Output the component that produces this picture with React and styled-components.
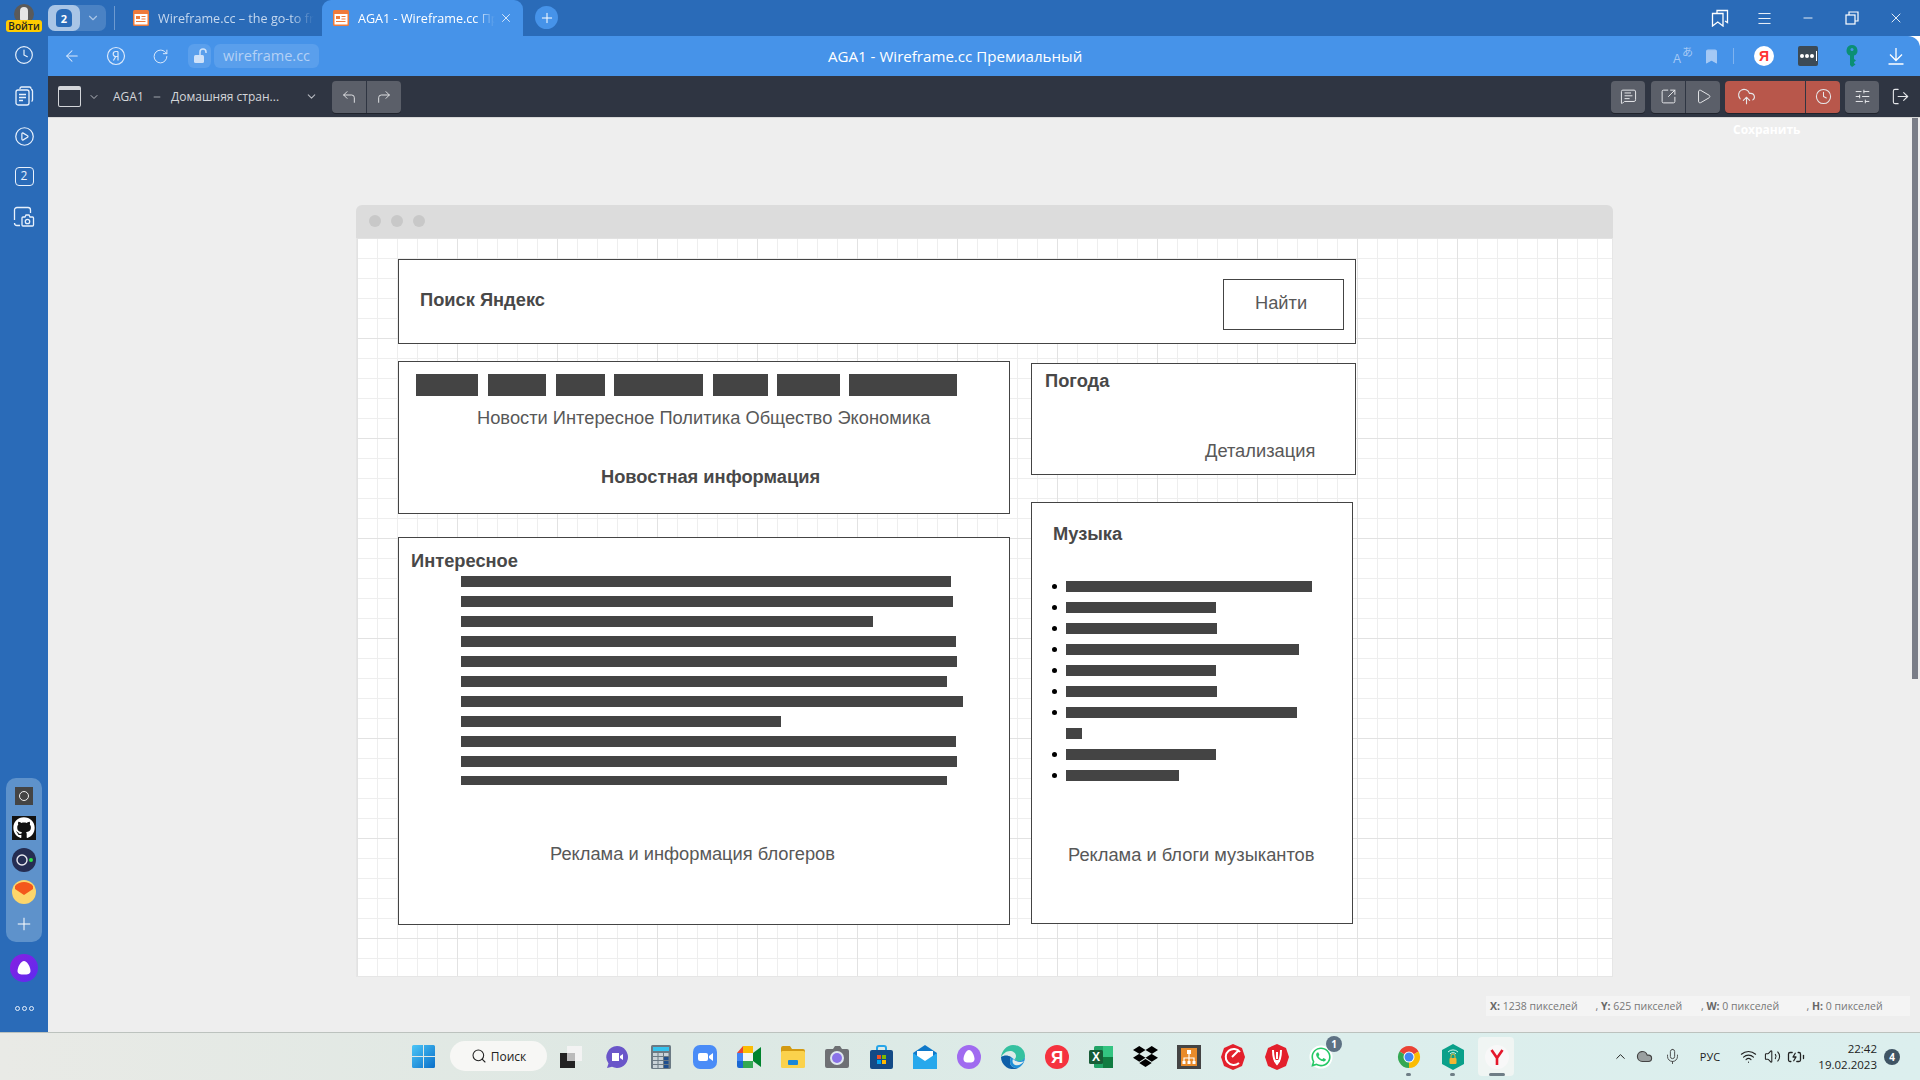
import React from 'react';
import styled, { createGlobalStyle } from 'styled-components';
import {
  ArrowLeft, RotateCw, Clock, CirclePlay, X, Plus, ChevronDown,
  CornerUpLeft, CornerUpRight, MessageSquareText, SquareArrowOutUpRight, Play, CloudUpload,
  SlidersHorizontal, LogOut, Menu, Minus, Bookmark, Search,
  ChevronUp, Mic, Wifi, Volume2, Cloud, BatteryCharging,
} from 'lucide-react';
import { FaGithub, FaDropbox, FaWhatsapp } from 'react-icons/fa';

const GlobalStyle = createGlobalStyle`
  html, body { margin: 0; padding: 0; width: 1920px; height: 1080px; overflow: hidden; }
  * { box-sizing: border-box; }
  body { font-family: "Open Sans", "Noto Sans", sans-serif; }
`;

const Page = styled.div`
  width: 1920px;
  height: 1080px;
  display: flex;
  flex-direction: column;
  overflow: hidden;
`;

/* tab strip */
const TabStrip = styled.div`
  height: 36px;
  flex: none;
  display: flex;
  align-items: stretch;
  background: #2a6bb8;
  color: #fff;
`;

const Avatar = styled.div`
  position: relative;
  width: 48px;
  flex: none;
`;

const AvatarHead = styled.div`
  position: absolute;
  left: 14px;
  top: 4px;
  width: 20px;
  height: 20px;
  border-radius: 50%;
  background: #5a5a5a;
  &::after {
    content: '';
    position: absolute;
    left: 6px;
    top: 3px;
    width: 8px;
    height: 14px;
    border-radius: 4px 4px 2px 2px;
    background: #e6e6e6;
  }
`;

const LoginBadge = styled.div`
  position: absolute;
  left: 6px;
  top: 20px;
  width: 36px;
  height: 12px;
  border-radius: 3px;
  background: #fc0;
  color: #222;
  font: 600 10px/12px "Open Sans", sans-serif;
  text-align: center;
`;

const CounterPill = styled.div`
  width: 58px;
  height: 26px;
  margin-top: 5px;
  display: flex;
  border-radius: 7px;
  background: #4a82c4;
`;

const CounterNum = styled.div`
  width: 32px;
  display: flex;
  align-items: center;
  justify-content: center;
  border-radius: 7px;
  background: #a9c5e6;
`;

const CounterShield = styled.div`
  width: 16px;
  height: 18px;
  border-radius: 6px 6px 3px 3px;
  background: #2a6bb8;
  color: #fff;
  font: 700 11px/19px "Open Sans", sans-serif;
  text-align: center;
`;

const CounterArrow = styled.div`
  flex: 1;
  display: flex;
  align-items: center;
  justify-content: center;
  color: #a9c5e6;
`;

const StripDivider = styled.div`
  width: 1px;
  height: 24px;
  margin: 6px 10px 0 8px;
  background: #6d9ad0;
`;

const Tab = styled.div`
  width: ${(p) => (p.$active ? 201 : 197)}px;
  flex: none;
  display: flex;
  align-items: center;
  gap: 9px;
  padding-left: ${(p) => (p.$active ? 11 : 8)}px;
  border-radius: 9px 9px 0 0;
  background: ${(p) => (p.$active ? '#4693e9' : 'transparent')};
  color: ${(p) => (p.$active ? '#fff' : '#c5d8ef')};
`;

const TabTitle = styled.div`
  width: ${(p) => (p.$active ? 137 : 156)}px;
  overflow: hidden;
  white-space: nowrap;
  font-size: 12.6px;
  mask-image: linear-gradient(to right, #000 85%, transparent);
`;

const TabClose = styled.div`
  margin-left: -5px;
  display: flex;
  color: #e8f1fc;
`;

const NewTab = styled.div`
  width: 23px;
  height: 23px;
  margin: 6px 0 0 12px;
  display: flex;
  align-items: center;
  justify-content: center;
  border-radius: 50%;
  background: #4693e9;
`;

const WindowButtons = styled.div`
  margin-left: auto;
  padding-right: 2px;
  display: flex;
`;

const Slot = styled.div`
  width: ${(p) => p.$w || 44}px;
  flex: none;
  display: flex;
  align-items: center;
  justify-content: center;
  color: ${(p) => p.$color || 'inherit'};
`;

/* main area under the tabs */
const Middle = styled.div`
  flex: 1;
  min-height: 0;
  display: flex;
`;

const Sidebar = styled.div`
  width: 48px;
  flex: none;
  display: flex;
  flex-direction: column;
  align-items: center;
  background: #2a6bb8;
  color: #e8f1fc;
`;

const SideIcon = styled.div`
  width: 48px;
  height: 40.5px;
  display: flex;
  align-items: center;
  justify-content: center;
  &:first-child { margin-top: -1px; }
`;

const SideBoxIcon = styled.div`
  width: 19px;
  height: 19px;
  border: 1.5px solid #e8f1fc;
  border-radius: 4px;
  font: 500 12px/16px "Open Sans", sans-serif;
  text-align: center;
`;

const SideBottom = styled.div`
  margin-top: auto;
  display: flex;
  flex-direction: column;
  align-items: center;
`;

const SidePanel = styled.div`
  width: 36px;
  padding: 2px 0;
  border-radius: 10px;
  background: #5e92cb;
`;

const PanelSlot = styled.div`
  height: 32px;
  display: flex;
  align-items: center;
  justify-content: center;
  color: #fff;
`;

const AliceSlot = styled(PanelSlot)`
  margin-top: 10px;
`;

const OSquare = styled.div`
  width: 18px;
  height: 18px;
  display: flex;
  align-items: center;
  justify-content: center;
  background: #444;
  &::after {
    content: '';
    width: 8px;
    height: 8px;
    border: 1.5px solid #eee;
    border-radius: 50%;
  }
`;

const GithubTile = styled.div`
  width: 24px;
  height: 24px;
  display: flex;
  align-items: center;
  justify-content: center;
  background: #111;
  color: #fff;
`;

const SideDots = styled.div`
  height: 32px;
  margin: 8px 0;
  display: flex;
  align-items: center;
  gap: 2px;
`;

const SideDot = styled.div`
  width: 5px;
  height: 5px;
  border: 1.5px solid #e8f1fc;
  border-radius: 50%;
`;

const Content = styled.div`
  flex: 1;
  min-width: 0;
  display: flex;
  flex-direction: column;
`;

/* address bar */
const AddressBar = styled.div`
  height: 40px;
  flex: none;
  display: flex;
  align-items: stretch;
  padding-left: 2px;
  border-radius: 0 12px 0 0;
  background: #4693e9;
  color: #fff;
`;

const NavGroup = styled.div`
  width: 778px;
  flex: none;
  display: flex;
  align-items: stretch;
  color: #dbe9fb;
`;

const LockPill = styled.div`
  width: 23px;
  height: 24px;
  margin: 8px 3px 0 6px;
  display: flex;
  align-items: center;
  justify-content: center;
  border-radius: 6px;
  background: #5a9fec;
`;

const UrlPill = styled.div`
  width: 105px;
  height: 24px;
  margin-top: 8px;
  border-radius: 6px;
  background: #5a9fec;
  color: #b4d1f5;
  font-size: 14.5px;
  line-height: 23px;
  text-align: center;
  white-space: nowrap;
`;

const PageTitle = styled.div`
  font-size: 15.1px;
  font-weight: 500;
  line-height: 40px;
  white-space: nowrap;
`;

const AddressRight = styled.div`
  margin-left: auto;
  padding-right: 2px;
  display: flex;
  align-items: stretch;
`;

const TranslateGlyph = styled.div`
  position: relative;
  width: 20px;
  height: 18px;
  color: #a5c9f5;
  font: 400 11px/11px "Liberation Sans", "Noto Sans CJK JP", sans-serif;
`;

const GlyphLatin = styled.span`
  position: absolute;
  left: 0;
  bottom: 0;
  font-size: 12px;
`;

const GlyphKana = styled.span`
  position: absolute;
  right: 0;
  top: 0;
`;

const SlotDivider = styled.div`
  width: 1px;
  height: 16px;
  background: #7fb3ef;
`;

const YaCircle = styled.div`
  width: 20px;
  height: 20px;
  border-radius: 50%;
  background: #fff;
  color: #f33;
  font: 700 14px/20px "Liberation Sans", sans-serif;
  text-align: center;
`;

const PassTile = styled.div`
  width: 20px;
  height: 20px;
  display: flex;
  align-items: center;
  justify-content: center;
  gap: 1px;
  border-radius: 2px;
  background: #3c4a55;
  &::after {
    content: '';
    width: 1px;
    height: 10px;
    margin-left: 1px;
    background: #fff;
  }
`;

const PassDot = styled.div`
  width: 4px;
  height: 4px;
  border-radius: 50%;
  background: #fff;
`;

/* editor toolbar */
const EditorBar = styled.div`
  position: relative;
  z-index: 2;
  height: 42px;
  flex: none;
  display: flex;
  align-items: center;
  padding-left: 10px;
  border-bottom: 1px solid #d8d8d8;
  background: #2f3542;
  color: #d4d6da;
`;

const WindowGlyph = styled.div`
  width: 23px;
  height: 21px;
  border: 1.5px solid #d4d6da;
  border-top-width: 4px;
  border-radius: 2px;
`;

const Crumb = styled.div`
  margin-left: ${(p) => p.$ml}px;
  width: ${(p) => p.$w}px;
  flex: none;
  font-size: 12px;
  font-weight: 500;
  white-space: nowrap;
`;

const CrumbArrow = styled.div`
  margin-left: ${(p) => p.$ml || 0}px;
  display: flex;
  color: #b6b9c0;
`;

const ToolGroup = styled.div`
  height: 32px;
  margin-left: ${(p) => p.$ml || 0}px;
  flex: none;
  display: flex;
  border-radius: 4px;
  overflow: hidden;
  background: ${(p) => (p.$red ? '#b8574b' : '#5b5f69')};
  box-shadow: 0 1px 0 #1f232c;
`;

const ToolButton = styled.div`
  width: ${(p) => p.$w || 34}px;
  display: flex;
  align-items: center;
  justify-content: ${(p) => (p.$start ? 'flex-start' : 'center')};
  padding-left: ${(p) => (p.$start ? 12 : 0)}px;
  color: #e6e7ea;
  & + & { border-left: 1px solid #2f3542; }
`;

const ToolRight = styled.div`
  margin-left: auto;
  display: flex;
  align-items: center;
`;

const ExportIcon = styled.div`
  width: 41px;
  display: flex;
  justify-content: center;
  padding-left: 2px;
  color: #e6e7ea;
`;

const SaveTip = styled.div`
  position: absolute;
  left: 1685px;
  top: 45px;
  color: #fff;
  font-size: 12px;
  font-weight: 700;
  white-space: nowrap;
`;

/* workspace with the wireframe window */
const Workspace = styled.div`
  position: relative;
  flex: 1;
  min-height: 0;
  padding: 87px 0 0 308px;
  background: #eee;
`;

const Scrollbar = styled.div`
  position: absolute;
  top: 0;
  right: 2px;
  width: 6px;
  height: 561px;
  background: #7a7d87;
`;

const Frame = styled.div`
  width: 1257px;
  height: 772px;
  display: flex;
  flex-direction: column;
`;

const FrameTitle = styled.div`
  height: 33px;
  flex: none;
  display: flex;
  align-items: center;
  gap: 10px;
  padding: 0 0 1px 13px;
  border-radius: 6px 6px 0 0;
  background: #dcdcdc;
`;

const FrameDot = styled.div`
  width: 12px;
  height: 12px;
  border-radius: 50%;
  background: #c8c8c8;
`;

const Canvas = styled.div`
  flex: 1;
  padding: 21px 0 0 41px;
  border: solid #e6e6e6;
  border-width: 0 1px 1px 1px;
  background-color: #fff;
  background-image:
    linear-gradient(to right, #e2e2e2 1px, transparent 1px),
    linear-gradient(to bottom, #e2e2e2 1px, transparent 1px),
    linear-gradient(to right, #eee 1px, transparent 1px),
    linear-gradient(to bottom, #eee 1px, transparent 1px);
  background-size: 100px 100px, 100px 100px, 20px 20px, 20px 20px;
`;

const WireBox = styled.div`
  width: ${(p) => p.$w}px;
  height: ${(p) => p.$h}px;
  flex: none;
  border: 1.5px solid #444;
  background: #fff;
  font-family: "Liberation Sans", Arial, sans-serif;
  font-size: 18.3px;
  line-height: 22px;
  color: #585858;
`;

const SearchBox = styled(WireBox)`
  display: flex;
  justify-content: space-between;
  padding: 29px 11px 0 21px;
`;

const FindButton = styled.div`
  width: 121px;
  height: 51px;
  margin-top: -10px;
  padding: 12px 0 0 31px;
  border: 1.5px solid #444;
`;

const Heading = styled.div`
  font-weight: 700;
  color: #484848;
  margin-left: ${(p) => p.$ml || 0}px;
  margin-top: ${(p) => p.$mt || 0}px;
  white-space: nowrap;
`;

const Label = styled.div`
  margin-left: ${(p) => p.$ml || 0}px;
  margin-top: ${(p) => p.$mt || 0}px;
  white-space: nowrap;
`;

const Columns = styled.div`
  display: flex;
  align-items: flex-start;
  gap: 21px;
  margin-top: 17px;
`;

const LeftColumn = styled.div`
  display: flex;
  flex-direction: column;
  gap: 23px;
`;

const RightColumn = styled.div`
  display: flex;
  flex-direction: column;
  gap: 27px;
  padding-top: 2px;
`;

const NewsTags = styled.div`
  display: flex;
  margin: 12px 0 0 17px;
`;

const NewsTag = styled.div`
  width: ${(p) => p.$w}px;
  height: 22px;
  margin-right: ${(p) => p.$gap}px;
  background: #444;
`;

const TextLines = styled.div`
  margin: 4px 0 0 62px;
  display: flex;
  flex-direction: column;
  gap: 9px;
`;

const TextLine = styled.div`
  width: ${(p) => p.$w}px;
  height: ${(p) => p.$h || 11}px;
  background: #444;
`;

const Bullets = styled.ul`
  list-style: none;
  margin: 36px 0 0 0;
  padding: 0 0 0 34px;
`;

const BulletRow = styled.li`
  position: relative;
  height: 21px;
  &::before {
    content: '';
    display: ${(p) => (p.$plain ? 'none' : 'block')};
    position: absolute;
    left: -14px;
    top: 3px;
    width: 5px;
    height: 5px;
    border-radius: 50%;
    background: #000;
  }
`;

const StatusBar = styled.div`
  position: absolute;
  left: 1438px;
  top: 878px;
  width: 424px;
  height: 20px;
  display: flex;
  padding-left: 4px;
  background: #f4f4f4;
  color: #777;
  font-size: 10.5px;
  line-height: 20px;
`;

const StatusCell = styled.div`
  width: 105.5px;
  flex: none;
  white-space: nowrap;
  b { color: #666; }
`;

/* windows taskbar */
const Taskbar = styled.div`
  height: 48px;
  flex: none;
  display: flex;
  align-items: stretch;
  padding-left: 412px;
  border-top: 1px solid #bcc2be;
  background: linear-gradient(to right, #e9eae6, #dde8e3 35%, #dceeec 70%, #dcefee);
  color: #222;
`;

const StartWrap = styled.div`
  width: 23px;
  margin-right: 15px;
  display: flex;
  align-items: center;
`;

const SearchPill = styled.div`
  width: 97px;
  height: 30px;
  margin: 8px 2px 0 0;
  display: flex;
  align-items: center;
  justify-content: center;
  gap: 4px;
  border-radius: 15px;
  background: #f7f7f5;
  font-size: 12px;
`;

const TaskSlot = styled.div`
  position: relative;
  width: 44px;
  flex: none;
  display: flex;
  align-items: center;
  justify-content: center;
  margin-right: ${(p) => p.$mr || 0}px;
  margin-left: ${(p) => p.$ml || 0}px;
`;

const ActiveTile = styled.div`
  position: absolute;
  left: 3px;
  top: 4px;
  width: 36px;
  height: 39px;
  border-radius: 4px;
  background: #f0f5f3;
`;

const TaskIconWrap = styled.div`
  position: relative;
  display: flex;
`;

const RunDot = styled.div`
  position: absolute;
  left: 50%;
  bottom: 4px;
  width: ${(p) => (p.$active ? 16 : 5)}px;
  height: 3px;
  margin-left: ${(p) => (p.$active ? -8 : -3)}px;
  border-radius: 2px;
  background: #6f7d86;
`;

const CountBadge = styled.div`
  position: absolute;
  right: 1px;
  top: 3px;
  width: 16px;
  height: 16px;
  border-radius: 50%;
  background: #5d7183;
  color: #fff;
  font: 700 10px/16px "Open Sans", sans-serif;
  text-align: center;
`;

const Tray = styled.div`
  margin-left: auto;
  display: flex;
  align-items: stretch;
  padding-right: 20px;
`;

const TrayText = styled.div`
  font-size: 11px;
`;

const TrayClock = styled.div`
  width: 67px;
  flex: none;
  text-align: right;
  font-size: 11.5px;
  line-height: 16px;
  padding-top: 8px;
`;

const NoteBadge = styled.div`
  width: 16px;
  height: 16px;
  margin: 16px 0 0 7px;
  border-radius: 50%;
  background: #3f5464;
  color: #fff;
  font: 700 10px/16px "Open Sans", sans-serif;
  text-align: center;
`;

/* drawn icons */
const Favicon = () => (
  <svg width="16" height="16" viewBox="0 0 16 16">
    <rect width="16" height="16" rx="1.5" fill="#ef7a3b" />
    <rect x="1.5" y="4" width="13" height="10.5" fill="#fff" />
    <rect x="3" y="6" width="4" height="3" fill="#ef7a3b" />
    <path d="M8.5 6.5h4M8.5 9h4M3 11.5h9.5" stroke="#ef7a3b" strokeWidth="1" />
  </svg>
);

const BookmarksIcon = () => (
  <svg width="18" height="18" viewBox="0 0 18 18" fill="none" stroke="#fff" strokeWidth="1.3">
    <path d="M6 4V1.500h10.500v12L14 12" />
    <path d="M1.500 4.500H12v12.500L6.750 13 1.500 17z" />
  </svg>
);

const RestoreIcon = () => (
  <svg width="14" height="14" viewBox="0 0 14 14" fill="none" stroke="#fff" strokeWidth="1.2">
    <rect x="1" y="4" width="9" height="9" />
    <path d="M4 4V1h9v9h-3" />
  </svg>
);

const LockFilled = () => (
  <svg width="16" height="16" viewBox="0 0 16 16">
    <rect x="2" y="7" width="10" height="8" rx="1.500" fill="#cfe2f9" />
    <path d="M8 7V4a3 3 0 0 1 6 0v1" fill="none" stroke="#cfe2f9" strokeWidth="1.500" />
  </svg>
);

const KeyIcon = () => (
  <svg width="12" height="22" viewBox="0 0 12 22">
    <path d="M6 0a5.500 5.500 0 0 1 2 10.600V14l2 1.500-2 1.500v1l1.500 1.500L6 22l-2-2V10.600A5.500 5.500 0 0 1 6 0z" fill="#0b8f74" />
    <circle cx="6" cy="4.500" r="1.500" fill="#4693e9" />
  </svg>
);

const DownloadIcon = () => (
  <svg width="18" height="18" viewBox="0 0 18 18" fill="none" stroke="#fff" strokeWidth="1.300">
    <path d="M9 1v12M3 7.500 9 13.500l6-6M1.500 17h15" />
  </svg>
);

const YaRing = () => (
  <svg width="20" height="20" viewBox="0 0 20 20">
    <circle cx="10" cy="10" r="8.5" fill="none" stroke="#dbe9fb" strokeWidth="1.2" />
    <path d="M12 5.500v9M12 5.500H9.700a2.400 2.400 0 0 0 0 5H12M9.800 10.500 7.400 14.500" fill="none" stroke="#dbe9fb" strokeWidth="1.2" />
  </svg>
);

const DocsIcon = () => (
  <svg width="20" height="20" viewBox="0 0 20 20" fill="none" stroke="#e8f1fc" strokeWidth="1.300">
    <path d="M6 3V2.500A1.500 1.500 0 0 1 7.500 1h8A1.500 1.500 0 0 1 17 2.500V3M17 3.500a1.500 1.500 0 0 1 1.500 1.500v9a1.500 1.500 0 0 1-1 1.400" />
    <rect x="2" y="4" width="13" height="15" rx="2" />
    <path d="M5 8.500h7M5 11.500h7M5 14.500h4" />
  </svg>
);

const ScreenshotIcon = () => (
  <svg width="22" height="22" viewBox="0 0 22 22" fill="none" stroke="#e8f1fc" strokeWidth="1.300">
    <path d="M1.500 14V4A2.500 2.500 0 0 1 4 1.500h11A2.500 2.500 0 0 1 17.500 4v3M1.500 17A2.500 2.500 0 0 0 4 19.500h3" />
    <path d="M10 11h2l1-2h3l1 2h2.500a1 1 0 0 1 1 1v7a1 1 0 0 1-1 1H10a1 1 0 0 1-1-1v-7a1 1 0 0 1 1-1z" />
    <circle cx="14.500" cy="15.500" r="2.200" />
  </svg>
);

const OwlTile = () => (
  <svg width="24" height="24" viewBox="0 0 24 24">
    <circle cx="12" cy="12" r="12" fill="#252d52" />
    <circle cx="10" cy="12" r="5" fill="none" stroke="#e8e8f0" strokeWidth="1.4" />
    <circle cx="19" cy="12" r="2" fill="#2ee04a" />
  </svg>
);

const MailTile = () => (
  <svg width="24" height="24" viewBox="0 0 24 24">
    <circle cx="12" cy="12" r="12" fill="#fdd66b" />
    <path d="M3 6a12 12 0 0 1 18 0v3l-9 6-9-6z" fill="#f4581c" />
  </svg>
);

const AliceBlob = () => (
  <svg width="28" height="28" viewBox="0 0 28 28">
    <defs>
      <linearGradient id="alice" x1="0" y1="0" x2="1" y2="1">
        <stop offset="0" stopColor="#8a1fe0" />
        <stop offset="1" stopColor="#5b2cf0" />
      </linearGradient>
    </defs>
    <circle cx="14" cy="14" r="14" fill="url(#alice)" />
    <path d="M14 7c3 0 6.500 6 6.500 10 0 3-3 3.500-6.500 3.500S7.500 20 7.500 17C7.500 13 11 7 14 7z" fill="#fff" />
  </svg>
);

const WinLogo = () => (
  <svg width="23" height="23" viewBox="0 0 23 23">
    <defs>
      <linearGradient id="win" x1="0" y1="0" x2="1" y2="1">
        <stop offset="0" stopColor="#4cc6f7" />
        <stop offset="1" stopColor="#0a6fc9" />
      </linearGradient>
    </defs>
    <path d="M0 1.500Q0 0 1.500 0H11v11H0zM12 0h9.500Q23 0 23 1.500V11H12zM0 12h11v11H1.500Q0 23 0 21.500zM12 12h11v9.500Q23 23 21.500 23H12z" fill="url(#win)" />
  </svg>
);

const TaskView = () => (
  <svg width="22" height="22" viewBox="0 0 22 22">
    <rect x="7" y="0" width="15" height="15" fill="#f3f3f3" />
    <rect x="0" y="7" width="15" height="15" fill="#222" />
    <rect x="7" y="7" width="8" height="8" fill="#bbb" />
  </svg>
);

const TeamsChat = () => (
  <svg width="24" height="24" viewBox="0 0 24 24">
    <path d="M12 1a11 11 0 1 1-5 20.800L2 23l1.500-4.500A11 11 0 0 1 12 1z" fill="#6a56c9" />
    <path d="M7 8h7v8H7zM15 11l3-2v6l-3-2z" fill="#fff" />
  </svg>
);

const Calc = () => (
  <svg width="20" height="24" viewBox="0 0 20 24">
    <rect width="20" height="24" rx="1.500" fill="#6b7a84" />
    <rect x="2" y="2" width="16" height="4" fill="#36c3ee" />
    {[8, 12, 16, 20].map((y) => [2, 7.500, 13].map((x) => (
      <rect key={`${x}-${y}`} x={x} y={y} width="4.500" height="3" fill={x === 13 && y > 11 ? '#1f4f8f' : '#c9d3d8'} />
    )))}
  </svg>
);

const ZoomIcon = () => (
  <svg width="24" height="24" viewBox="0 0 24 24">
    <rect width="24" height="24" rx="7" fill="#4a8cf7" />
    <rect x="5" y="8" width="10" height="8" rx="2" fill="#fff" />
    <path d="M16 11l4-3v8l-4-3z" fill="#fff" />
  </svg>
);

const MeetIcon = () => (
  <svg width="24" height="22" viewBox="0 0 24 22">
    <path d="M6 0h10v7H6z" fill="#fbbc04" />
    <path d="M0 7h6v8H0z" fill="#4285f4" />
    <path d="M0 15h6v7H2a2 2 0 0 1-2-2z" fill="#1967d2" />
    <path d="M6 7h10v8H6z" fill="#f2f5f2" />
    <path d="M6 15h10v7H6z" fill="#34a853" />
    <path d="M16 7v8l8 6V1z" fill="#00832d" />
    <path d="M0 7l6-7v7z" fill="#ea4335" />
  </svg>
);

const FolderIcon = () => (
  <svg width="24" height="22" viewBox="0 0 24 22">
    <path d="M0 2a2 2 0 0 1 2-2h7l2 3h11a2 2 0 0 1 2 2v2H0z" fill="#d39a12" />
    <rect y="5" width="24" height="17" rx="1.500" fill="#fbd24c" />
    <rect x="7" y="14" width="10" height="5" rx="1" fill="#1a87d9" />
  </svg>
);

const CameraIcon = () => (
  <svg width="24" height="22" viewBox="0 0 24 22">
    <path d="M2 3h6l2-3h5l2 3h5a2 2 0 0 1 2 2v15a2 2 0 0 1-2 2H2a2 2 0 0 1-2-2V5a2 2 0 0 1 2-2z" fill="#6e7074" />
    <circle cx="12" cy="12" r="7" fill="#dfe6ee" />
    <circle cx="12" cy="12" r="5" fill="#8a72e8" />
  </svg>
);

const StoreIcon = () => (
  <svg width="23" height="24" viewBox="0 0 23 24">
    <path d="M7 6V3a2 2 0 0 1 2-2h5a2 2 0 0 1 2 2v3" fill="none" stroke="#27a5e8" strokeWidth="2" />
    <rect y="5" width="23" height="19" rx="2" fill="#134a86" />
    <rect x="7" y="10" width="4" height="4" fill="#f25022" />
    <rect x="12" y="10" width="4" height="4" fill="#7fba00" />
    <rect x="7" y="15" width="4" height="4" fill="#00a4ef" />
    <rect x="12" y="15" width="4" height="4" fill="#ffb900" />
  </svg>
);

const MailIcon = () => (
  <svg width="24" height="24" viewBox="0 0 24 24">
    <path d="M0 8l12-8 12 8v16H0z" fill="#0f78c9" />
    <path d="M4 6h16v8l-8 5-8-5z" fill="#fff" />
    <path d="M0 8l12 8 12-8v16H0z" fill="#27a8ec" />
  </svg>
);

const AliceFlat = () => (
  <svg width="24" height="24" viewBox="0 0 24 24">
    <circle cx="12" cy="12" r="12" fill="#a06bf0" />
    <path d="M12 5c3 0 5.500 6 5.500 9 0 3-2.500 3.500-5.500 3.500S6.500 17 6.500 14C6.500 11 9 5 12 5z" fill="#fff" />
  </svg>
);

const EdgeIcon = () => (
  <svg width="24" height="24" viewBox="0 0 24 24">
    <path d="M0 12a12 12 0 0 0 17 11c-4 .5-8-2-8-6 0-3 1-4 1-5-3-2-7-2-10 0z" fill="#0f5fa8" />
    <path d="M0 12C1 5 6 0 12 0c7 0 12 5 12 11 0 3-2 5-6 5-2 0-4-.5-4-2 0-1 1-1 1-3 0-3-3-5-6-5-4 0-7 3-9 6z" fill="#35c1a0" />
    <path d="M10 12c2 1 3 3 7 4 3 .5 6-1 7-4 0 5-3 9-7 11-4 .5-8-2-8-6 0-2 .5-3 1-5z" fill="#1f8fd8" />
    <path d="M12 14c-1 2-.5 5 2 6 4 1 7-1 9-4-3 2-8 1-11-2z" fill="#e3ecea" />
  </svg>
);

const YaRed = () => (
  <svg width="24" height="24" viewBox="0 0 24 24">
    <circle cx="12" cy="12" r="12" fill="#f5333f" />
    <text x="12" y="18" textAnchor="middle" fontFamily="Liberation Sans" fontWeight="700" fontSize="17" fill="#fff">Я</text>
  </svg>
);

const ExcelIcon = () => (
  <svg width="24" height="24" viewBox="0 0 24 24">
    <rect x="5" y="1" width="19" height="22" rx="1.500" fill="#21a366" />
    <rect x="14" y="1" width="10" height="11" fill="#33c481" />
    <rect x="14" y="12" width="10" height="11" fill="#107c41" />
    <rect y="5" width="14" height="14" rx="1.500" fill="#185c37" />
    <text x="7" y="16" textAnchor="middle" fontFamily="Liberation Sans" fontWeight="700" fontSize="12" fill="#fff">X</text>
  </svg>
);

const OrgIcon = () => (
  <svg width="24" height="24" viewBox="0 0 24 24">
    <rect width="24" height="24" fill="#444" />
    <rect x="4" y="3" width="16" height="18" fill="#e98b2a" />
    <path d="M12 9v4M7 16v-3h10v3M12 13v3" stroke="#fff" strokeWidth="1.200" fill="none" />
    <rect x="10" y="5" width="4" height="4" fill="#fff" />
    <path d="M5.500 16h3v3h-3zM10.500 16h3v3h-3zM15.500 16h3v3h-3z" fill="#fff" />
  </svg>
);

const RedShield = ({ inner }) => (
  <svg width="24" height="26" viewBox="0 0 24 26">
    <path d="M12 0l9 4 3 9-3 9-9 4-9-4-3-9 3-9z" fill="#e3202c" />
    {inner === 'clock'
      ? <path d="M19 8a8 8 0 1 0-1 11M11 13l6-6" fill="none" stroke="#fff" strokeWidth="2" />
      : <path d="M8 6c0 8 1 11 4 14 3-3 4-6 4-14M12 8v7M9 17h6" fill="none" stroke="#fff" strokeWidth="2" />}
  </svg>
);

const WhatsApp = () => (
  <svg width="24" height="24" viewBox="0 0 24 24">
    <circle cx="12" cy="12" r="11.500" fill="#fff" />
    <foreignObject x="1" y="1" width="22" height="22">
      <FaWhatsapp size={22} color="#25c866" />
    </foreignObject>
  </svg>
);

const ChromeIcon = () => (
  <svg width="24" height="24" viewBox="0 0 24 24">
    <path d="M12 12 2.470 6.500A11 11 0 0 1 21.530 6.500Z" fill="#ea4335" />
    <path d="M12 12 2.470 6.500A11 11 0 0 0 12 23Z" fill="#34a853" />
    <path d="M12 12 12 23A11 11 0 0 0 21.530 6.500Z" fill="#fbbc04" />
    <circle cx="12" cy="12" r="5.500" fill="#fff" />
    <circle cx="12" cy="12" r="4.500" fill="#4285f4" />
  </svg>
);

const TealHex = () => (
  <svg width="22" height="26" viewBox="0 0 22 26">
    <path d="M11 0l11 6v14l-11 6-11-6V6z" fill="#0aa08a" />
    <path d="M6 8a7 7 0 0 1 10 0M8 10a4 4 0 0 1 6 0" fill="none" stroke="#d7f3ec" strokeWidth="1" />
    <rect x="7.500" y="14" width="7" height="6" rx="1" fill="#f2b632" />
    <path d="M9 14v-2a2 2 0 0 1 4 0v2" fill="none" stroke="#f2b632" strokeWidth="1" />
  </svg>
);

const YaBrowser = () => (
  <svg width="24" height="24" viewBox="0 0 24 24">
    <circle cx="12" cy="12" r="12" fill="#f8f8f8" />
    <path d="M6.500 5 12 13v7M17.500 5 12 13" fill="none" stroke="#e4172b" strokeWidth="2.600" />
  </svg>
);

const leftBars = [490, 492, 412, 495, 496, 486, 502, 320, 495, 496];
const musicBars = [
  { w: 246 }, { w: 150 }, { w: 151 }, { w: 233 }, { w: 150 }, { w: 151 }, { w: 231 },
  { w: 16, plain: true }, { w: 150 }, { w: 113 },
];
const newsTags = [[62, 10], [58, 10], [49, 9], [89, 10], [55, 9], [63, 9], [108, 0]];
const taskIcons = [
  TeamsChat, Calc, ZoomIcon, MeetIcon, FolderIcon, CameraIcon, StoreIcon, MailIcon,
  AliceFlat, EdgeIcon, YaRed, ExcelIcon,
];

const App = () => (
  <Page>
    <GlobalStyle />
    <TabStrip>
      <Avatar>
        <AvatarHead />
        <LoginBadge>Войти</LoginBadge>
      </Avatar>
      <CounterPill>
        <CounterNum><CounterShield>2</CounterShield></CounterNum>
        <CounterArrow><ChevronDown size={14} /></CounterArrow>
      </CounterPill>
      <StripDivider />
      <Tab>
        <Favicon />
        <TabTitle>Wireframe.cc – the go-to free</TabTitle>
      </Tab>
      <Tab $active>
        <Favicon />
        <TabTitle $active>AGA1 - Wireframe.cc Премиальный</TabTitle>
        <TabClose><X size={14} strokeWidth={1.5} /></TabClose>
      </Tab>
      <NewTab><Plus size={16} strokeWidth={1.5} /></NewTab>
      <WindowButtons>
        <Slot><BookmarksIcon /></Slot>
        <Slot><Menu size={17} strokeWidth={1.3} /></Slot>
        <Slot><Minus size={14} strokeWidth={1.5} /></Slot>
        <Slot><RestoreIcon /></Slot>
        <Slot><X size={16} strokeWidth={1.3} /></Slot>
      </WindowButtons>
    </TabStrip>

    <Middle>
      <Sidebar>
        <SideIcon><Clock size={20} strokeWidth={1.4} /></SideIcon>
        <SideIcon><DocsIcon /></SideIcon>
        <SideIcon><CirclePlay size={21} strokeWidth={1.4} /></SideIcon>
        <SideIcon><SideBoxIcon>2</SideBoxIcon></SideIcon>
        <SideIcon><ScreenshotIcon /></SideIcon>
        <SideBottom>
          <SidePanel>
            <PanelSlot><OSquare /></PanelSlot>
            <PanelSlot><GithubTile><FaGithub size={22} /></GithubTile></PanelSlot>
            <PanelSlot><OwlTile /></PanelSlot>
            <PanelSlot><MailTile /></PanelSlot>
            <PanelSlot><Plus size={20} strokeWidth={1.2} /></PanelSlot>
          </SidePanel>
          <AliceSlot><AliceBlob /></AliceSlot>
          <SideDots><SideDot /><SideDot /><SideDot /></SideDots>
        </SideBottom>
      </Sidebar>

      <Content>
        <AddressBar>
          <NavGroup>
            <Slot><ArrowLeft size={18} strokeWidth={1.4} /></Slot>
            <Slot><YaRing /></Slot>
            <Slot><RotateCw size={17} strokeWidth={1.4} /></Slot>
            <LockPill><LockFilled /></LockPill>
            <UrlPill>wireframe.cc</UrlPill>
          </NavGroup>
          <PageTitle>AGA1 - Wireframe.cc Премиальный</PageTitle>
          <AddressRight>
            <Slot $w={28}><TranslateGlyph><GlyphLatin>A</GlyphLatin><GlyphKana>あ</GlyphKana></TranslateGlyph></Slot>
            <Slot $w={28} $color="#a5c9f5"><Bookmark size={17} fill="#a5c9f5" strokeWidth={1.5} /></Slot>
            <Slot $w={17}><SlotDivider /></Slot>
            <Slot><YaCircle>Я</YaCircle></Slot>
            <Slot><PassTile><PassDot /><PassDot /><PassDot /></PassTile></Slot>
            <Slot><KeyIcon /></Slot>
            <Slot><DownloadIcon /></Slot>
          </AddressRight>
        </AddressBar>

        <EditorBar>
          <WindowGlyph />
          <CrumbArrow $ml={7}><ChevronDown size={12} /></CrumbArrow>
          <Crumb $ml={13} $w={32}>AGA1</Crumb>
          <CrumbArrow $ml={7}><Minus size={10} /></CrumbArrow>
          <Crumb $ml={9} $w={134}>Домашняя стран...</Crumb>
          <CrumbArrow><ChevronDown size={13} /></CrumbArrow>
          <ToolGroup $ml={14}>
            <ToolButton><CornerUpLeft size={16} strokeWidth={1.4} /></ToolButton>
            <ToolButton $w={35}><CornerUpRight size={16} strokeWidth={1.4} /></ToolButton>
          </ToolGroup>
          <ToolRight>
            <ToolGroup>
              <ToolButton><MessageSquareText size={17} strokeWidth={1.4} /></ToolButton>
            </ToolGroup>
            <ToolGroup $ml={6}>
              <ToolButton><SquareArrowOutUpRight size={17} strokeWidth={1.4} /></ToolButton>
              <ToolButton $w={35}><Play size={17} strokeWidth={1.4} /></ToolButton>
            </ToolGroup>
            <ToolGroup $ml={5} $red>
              <ToolButton $w={80} $start><CloudUpload size={19} strokeWidth={1.4} /></ToolButton>
              <ToolButton $w={35}><Clock size={17} strokeWidth={1.5} /></ToolButton>
            </ToolGroup>
            <ToolGroup $ml={5}>
              <ToolButton><SlidersHorizontal size={17} strokeWidth={1.4} /></ToolButton>
            </ToolGroup>
            <ExportIcon><LogOut size={19} strokeWidth={1.4} /></ExportIcon>
          </ToolRight>
          <SaveTip>Сохранить</SaveTip>
        </EditorBar>

        <Workspace>
          <Scrollbar />
          <Frame>
            <FrameTitle><FrameDot /><FrameDot /><FrameDot /></FrameTitle>
            <Canvas>
              <SearchBox $w={958} $h={85}>
                <Heading>Поиск Яндекс</Heading>
                <FindButton>Найти</FindButton>
              </SearchBox>
              <Columns>
                <LeftColumn>
                  <WireBox $w={612} $h={153}>
                    <NewsTags>
                      {newsTags.map(([w, gap], i) => <NewsTag key={i} $w={w} $gap={gap} />)}
                    </NewsTags>
                    <Label $ml={78} $mt={11}>Новости Интересное Политика Общество Экономика</Label>
                    <Heading $ml={202} $mt={37}>Новостная информация</Heading>
                  </WireBox>
                  <WireBox $w={612} $h={388}>
                    <Heading $ml={12} $mt={12}>Интересное</Heading>
                    <TextLines>
                      {leftBars.map((w, i) => <TextLine key={i} $w={w} />)}
                      <TextLine $w={486} $h={9} />
                    </TextLines>
                    <Label $ml={151} $mt={58}>Реклама и информация блогеров</Label>
                  </WireBox>
                </LeftColumn>
                <RightColumn>
                  <WireBox $w={325} $h={112}>
                    <Heading $ml={13} $mt={6}>Погода</Heading>
                    <Label $ml={173} $mt={48}>Детализация</Label>
                  </WireBox>
                  <WireBox $w={322} $h={422}>
                    <Heading $ml={21} $mt={20}>Музыка</Heading>
                    <Bullets>
                      {musicBars.map((b, i) => (
                        <BulletRow key={i} $plain={b.plain}><TextLine $w={b.w} /></BulletRow>
                      ))}
                    </Bullets>
                    <Label $ml={36} $mt={53}>Реклама и блоги музыкантов</Label>
                  </WireBox>
                </RightColumn>
              </Columns>
            </Canvas>
          </Frame>
          <StatusBar>
            <StatusCell><b>X:</b> 1238 пикселей</StatusCell>
            <StatusCell>, <b>Y:</b> 625 пикселей</StatusCell>
            <StatusCell>, <b>W:</b> 0 пикселей</StatusCell>
            <StatusCell>, <b>H:</b> 0 пикселей</StatusCell>
          </StatusBar>
        </Workspace>
      </Content>
    </Middle>

    <Taskbar>
      <StartWrap><WinLogo /></StartWrap>
      <SearchPill><Search size={16} strokeWidth={1.6} />Поиск</SearchPill>
      <TaskSlot $mr={2}><TaskView /></TaskSlot>
      {taskIcons.map((Icon, i) => (
        <TaskSlot key={i}><Icon /></TaskSlot>
      ))}
      <TaskSlot><FaDropbox size={25} color="#000" /></TaskSlot>
      <TaskSlot><OrgIcon /></TaskSlot>
      <TaskSlot><RedShield inner="clock" /></TaskSlot>
      <TaskSlot><RedShield inner="lock" /></TaskSlot>
      <TaskSlot><WhatsApp /><CountBadge>1</CountBadge></TaskSlot>
      <TaskSlot $ml={44}><ChromeIcon /><RunDot /></TaskSlot>
      <TaskSlot><TealHex /><RunDot /></TaskSlot>
      <TaskSlot>
        <ActiveTile />
        <TaskIconWrap><YaBrowser /></TaskIconWrap>
        <RunDot $active />
      </TaskSlot>
      <Tray>
        <Slot $w={20}><ChevronUp size={15} strokeWidth={1.6} /></Slot>
        <Slot $w={28} $color="#444"><Cloud size={17} fill="#9aa0a0" strokeWidth={1.6} /></Slot>
        <Slot $w={28} $color="#444"><Mic size={17} strokeWidth={1.3} /></Slot>
        <Slot $w={48}><TrayText>РУС</TrayText></Slot>
        <Slot $w={28}><Wifi size={17} strokeWidth={1.6} /></Slot>
        <Slot $w={20}><Volume2 size={17} strokeWidth={1.5} /></Slot>
        <Slot $w={28}><BatteryCharging size={18} strokeWidth={1.7} /></Slot>
        <TrayClock>22:42<br />19.02.2023</TrayClock>
        <NoteBadge>4</NoteBadge>
      </Tray>
    </Taskbar>
  </Page>
);

export default App;
